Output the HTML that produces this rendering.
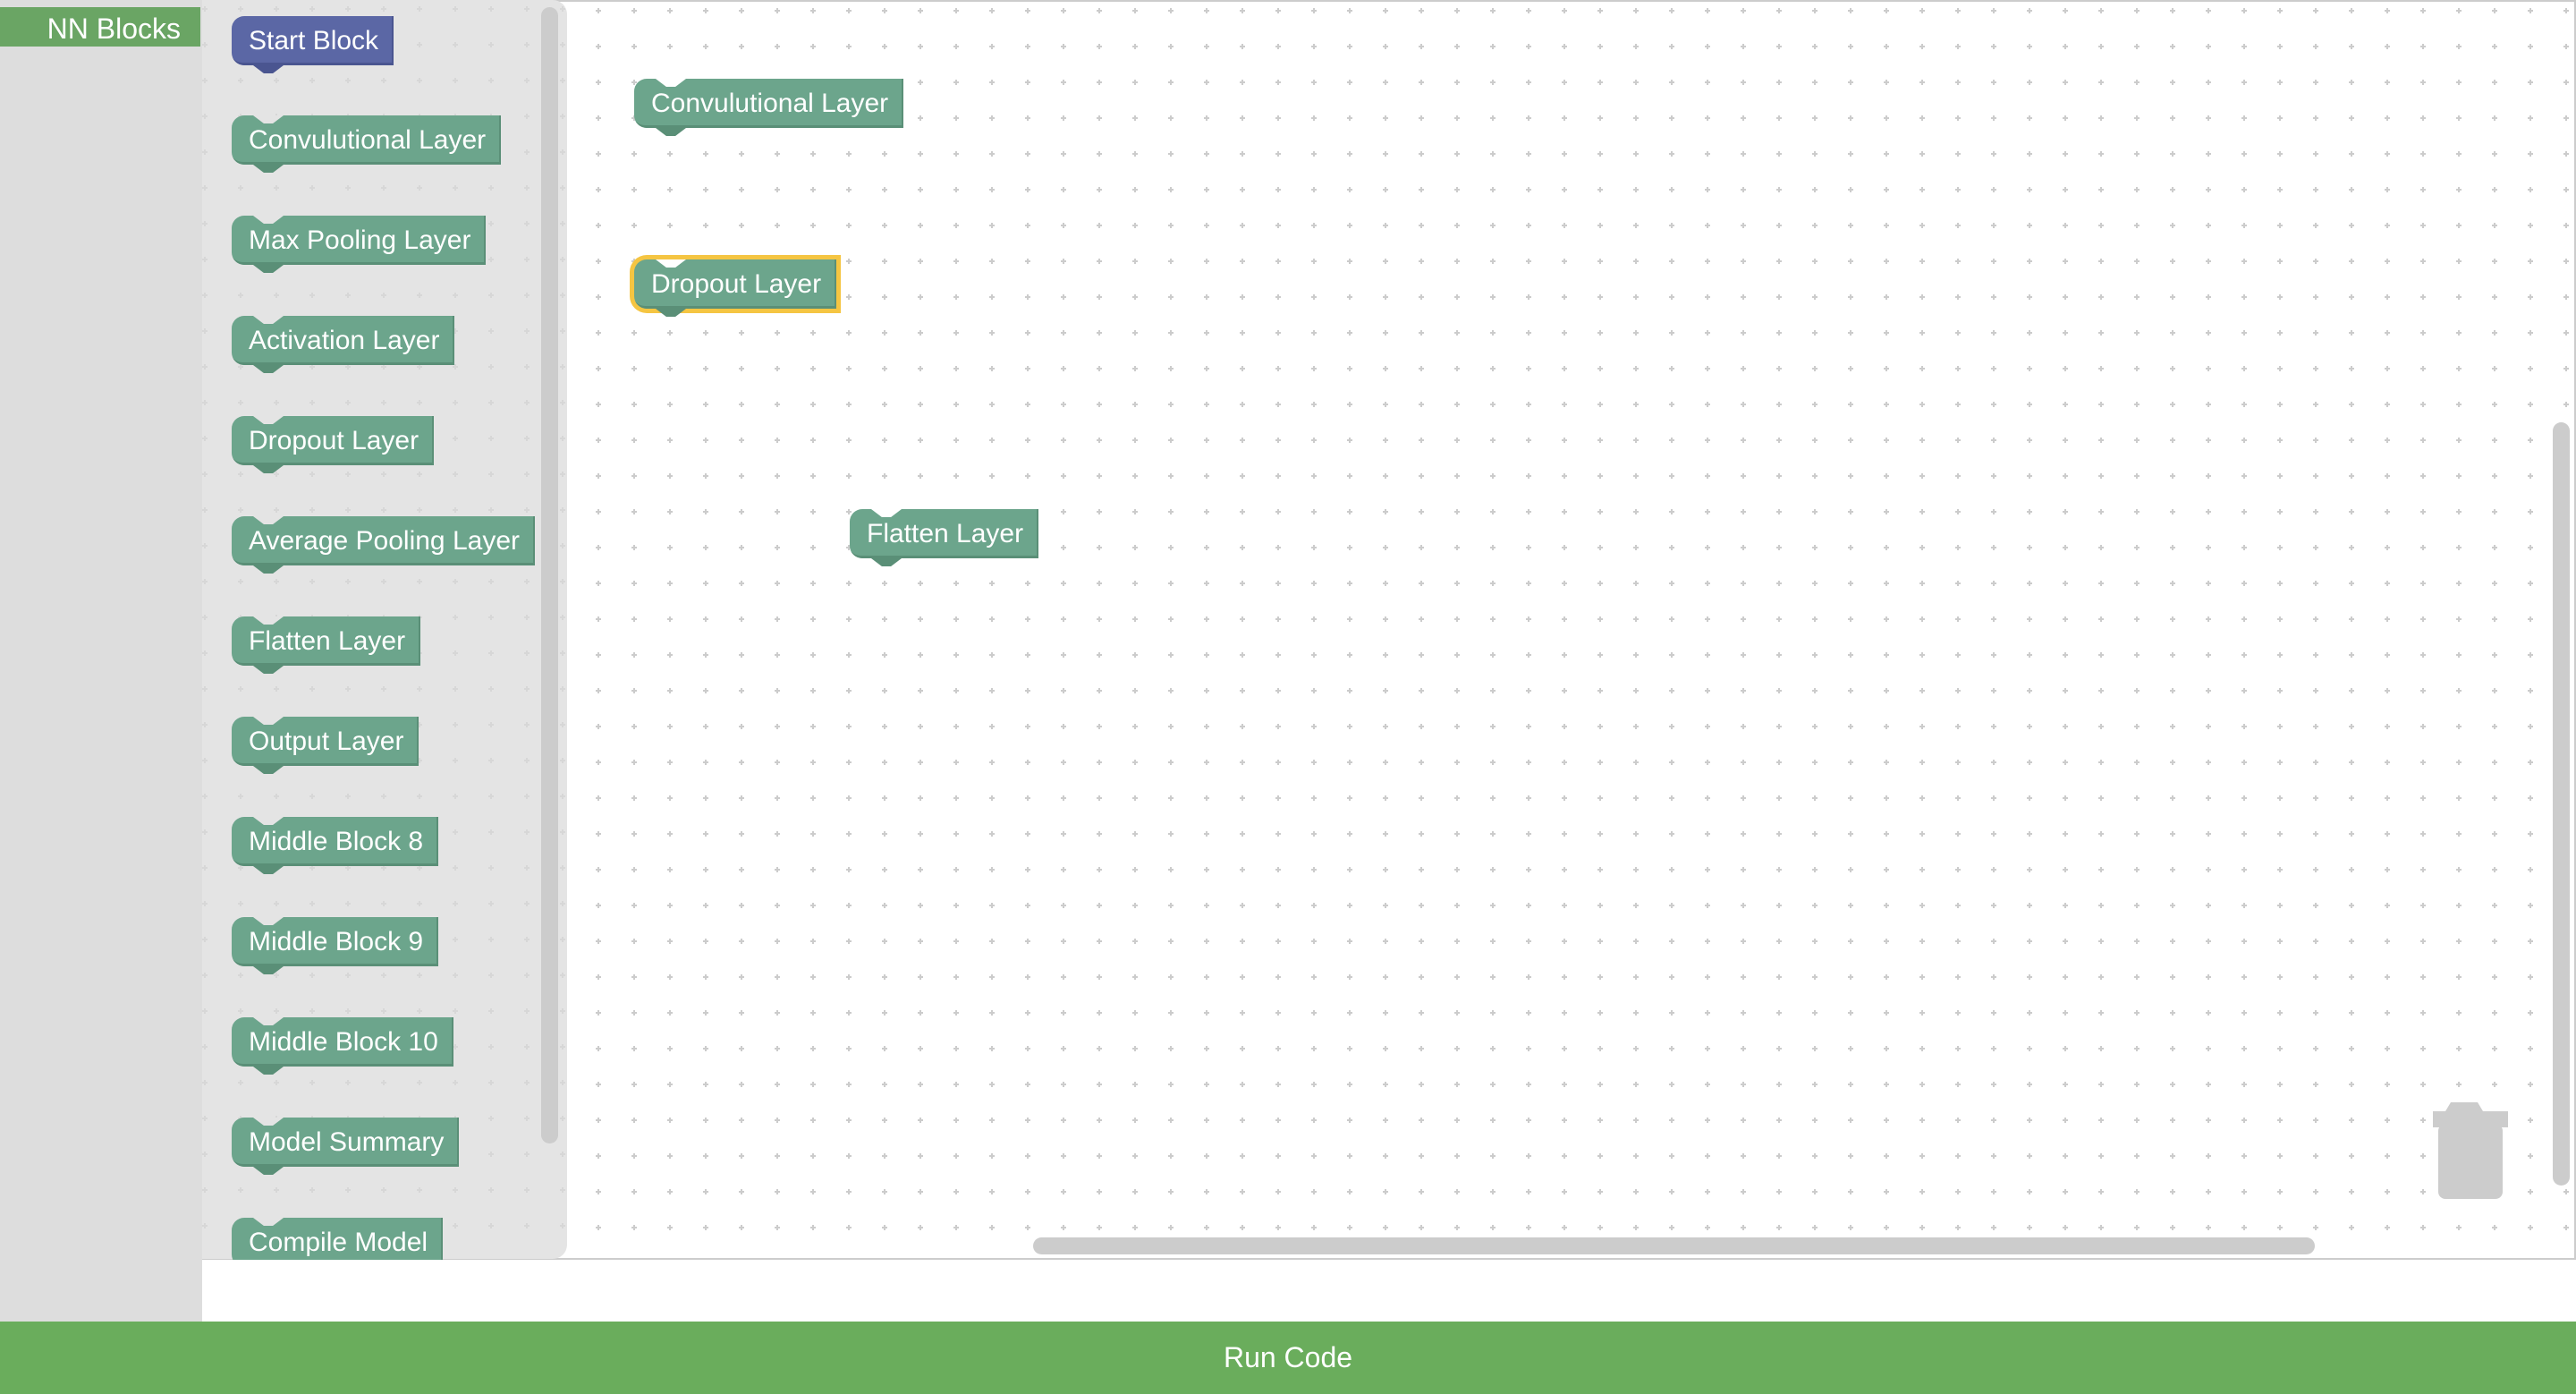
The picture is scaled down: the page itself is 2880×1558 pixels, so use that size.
<!DOCTYPE html>
<html><head><meta charset="utf-8"><style>
*{margin:0;padding:0;box-sizing:border-box}
body{width:2880px;height:1558px;position:relative;overflow:hidden;background:#fff;font-family:"Liberation Sans",Arial,sans-serif}
#left{position:absolute;left:0;top:0;width:226px;height:1477px;background:#ddd}
#hdr{position:absolute;left:0;top:8px;width:224px;height:44px;background:#6aa564;color:#fff;font-size:32px;line-height:48px;text-align:right;padding-right:22px}
#ws{position:absolute;left:226px;top:0;width:2654px;height:1408px;border:2px solid #ccc;border-left:none;background:#fff;overflow:hidden}
#fly{position:absolute;left:226px;top:0;width:408px;height:1407px;background:#e4e4e4;border-radius:0 16px 16px 0}
.blk{position:absolute;height:55px;line-height:55px;font-size:30px;color:#fff;padding:0 17px 0 19px;border-radius:14px 0 0 14px;white-space:nowrap;background:#6ca58c;box-shadow:inset -2px -3px 0 #5a8f77}
.blk::before{content:"";position:absolute;top:0;left:24px;width:34px;height:9px;background:var(--bg);clip-path:polygon(0 0,100% 0,65% 100%,35% 100%)}
.blk::after{content:"";position:absolute;top:100%;left:24px;width:34px;height:9px;background:#5a8f77;clip-path:polygon(0 0,100% 0,65% 100%,35% 100%)}
.start{background:#5b67a5;box-shadow:inset -2px -3px 0 #4a5590}
.start::before{display:none}
.start::after{background:#4a5590}
.fb{--bg:#e4e4e4;left:259px}
.wb{--bg:#fff}
.sel{box-shadow:0 0 0 5px #f5c542,inset -2px -3px 0 #5a8f77}
#run{position:absolute;left:0;top:1477px;width:2880px;height:81px;background:#6aad5c;color:#fff;font-size:32px;line-height:81px;text-align:center}
</style></head><body>
<div id="left"></div>
<div id="hdr">NN Blocks</div>
<div id="ws">
<svg width="2654" height="1408" style="position:absolute;left:0;top:0">
<defs><pattern id="g" x="-226" y="0" width="40" height="40" patternUnits="userSpaceOnUse">
<path d="M29 7v6M26 10h6" stroke="#ccc" stroke-width="2"/></pattern></defs>
<rect width="2654" height="1408" fill="url(#g)"/>
<rect x="929" y="1381" width="1433" height="19" rx="9.5" fill="#ccc"/>
<rect x="2628" y="470" width="19" height="853" rx="9.5" fill="#ccc"/>
<path d="M2494 1240h14l6 -10h30l6 10h28v18h-84z" fill="#ccc"/>
<rect x="2500" y="1254" width="72" height="84" rx="8" fill="#ccc"/>
</svg>
</div>
<div id="fly">
<svg width="408" height="1407" style="position:absolute;left:0;top:0;opacity:.5"><rect width="408" height="1407" fill="url(#g)"/></svg>
<div style="position:absolute;left:379px;top:8px;width:19px;height:1270px;border-radius:10px;background:#ccc"></div>
</div>
<div class="blk fb start" style="top:18px">Start Block</div>
<div class="blk fb" style="top:129px">Convulutional Layer</div>
<div class="blk fb" style="top:241px">Max Pooling Layer</div>
<div class="blk fb" style="top:353px">Activation Layer</div>
<div class="blk fb" style="top:465px">Dropout Layer</div>
<div class="blk fb" style="top:577px">Average Pooling Layer</div>
<div class="blk fb" style="top:689px">Flatten Layer</div>
<div class="blk fb" style="top:801px">Output Layer</div>
<div class="blk fb" style="top:913px">Middle Block 8</div>
<div class="blk fb" style="top:1025px">Middle Block 9</div>
<div class="blk fb" style="top:1137px">Middle Block 10</div>
<div class="blk fb" style="top:1249px">Model Summary</div>
<div class="blk fb" style="top:1361px">Compile Model</div>
<div style="position:absolute;left:226px;top:1408px;width:2654px;height:69px;background:#fff"></div>
<div class="blk wb" style="left:709px;top:88px">Convulutional Layer</div>
<div class="blk wb sel" style="left:709px;top:290px">Dropout Layer</div>
<div class="blk wb" style="left:950px;top:569px">Flatten Layer</div>
<div id="run">Run Code</div>
</body></html>
